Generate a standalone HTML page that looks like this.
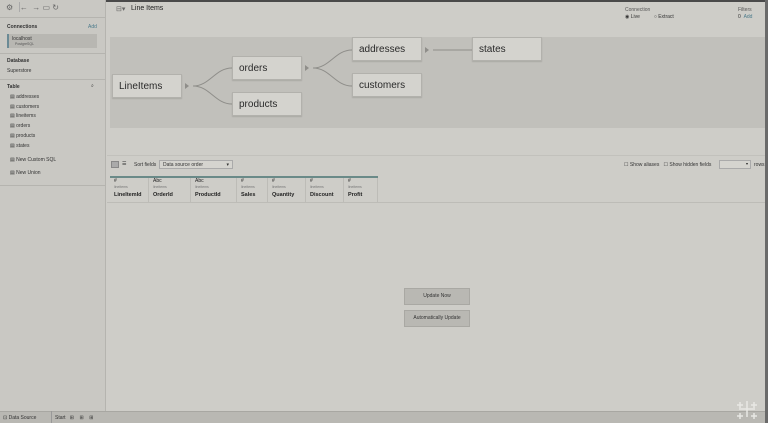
<!DOCTYPE html>
<html><head><style>
*{margin:0;padding:0;box-sizing:border-box}
body{width:768px;height:423px;overflow:hidden;background:#cecdc8;font-family:"Liberation Sans",sans-serif;color:#222;position:relative}
.a{position:absolute}
.side{left:0;top:0;width:106px;height:411px;background:#c9c8c3;border-right:1px solid #b5b4af}
.t{font-size:5px;color:#333}
.box{position:absolute;background:#d4d3ce;border:1px solid #b2b1ac;box-shadow:0 1px 1px rgba(0,0,0,.12);font-size:10px;padding-left:6px;display:flex;align-items:center;color:#2a2a2a}
.col{position:absolute;top:178px;height:24px;border-right:1px solid #bdbcb7;font-size:5px;padding-left:4px}
.col b{display:block;font-size:5.5px;margin-top:2px}
.btn{position:absolute;left:404px;width:66px;height:17px;background:#b9b8b3;border:1px solid #a9a8a3;font-size:5px;text-align:center;line-height:15px;color:#333}
</style></head><body>
<div class="a" style="left:0;top:0;width:768px;height:2px;background:#4a4a4a"></div>
<div class="a" style="left:765px;top:0;width:3px;height:423px;background:#6a6a6a"></div>
<div class="a side">
 <div class="a t" style="left:6px;top:3px;font-size:8px;color:#666">⚙ &nbsp;&nbsp;← &nbsp;→ ▭ ↻</div>
 <div class="a" style="left:19px;top:2px;width:1px;height:10px;background:#aaa"></div>
 <div class="a" style="left:0;top:17px;width:106px;height:1px;background:#b5b4af"></div>
 <div class="a t" style="left:7px;top:24px;font-weight:bold">Connections</div>
 <div class="a t" style="left:88px;top:24px;color:#4a7a8a">Add</div>
 <div class="a" style="left:7px;top:34px;width:90px;height:14px;background:#b8b7b2;border-left:2px solid #6a8a95"></div>
 <div class="a t" style="left:12px;top:36px">localhost</div>
 <div class="a" style="left:15px;top:42px;font-size:3.5px;color:#555">PostgreSQL</div>
 <div class="a" style="left:0;top:53px;width:106px;height:1px;background:#b5b4af"></div>
 <div class="a t" style="left:7px;top:58px;font-weight:bold">Database</div>
 <div class="a t" style="left:7px;top:68px">Superstore</div>
 <div class="a" style="left:0;top:79px;width:106px;height:1px;background:#b5b4af"></div>
 <div class="a t" style="left:7px;top:84px;font-weight:bold">Table</div>
 <div class="a t" style="left:91px;top:83px">⌕</div>
 <div class="a t" style="left:10px;top:93px;line-height:9.7px">▤ addresses<br>▤ customers<br>▤ lineitems<br>▤ orders<br>▤ products<br>▤ states</div>
 <div class="a t" style="left:10px;top:157px">▤ New Custom SQL</div>
 <div class="a t" style="left:10px;top:170px">▤ New Union</div>
 <div class="a" style="left:0;top:185px;width:106px;height:1px;background:#b5b4af"></div>
</div>
<div class="a t" style="left:116px;top:5px;font-size:7px;color:#666">⊟▾</div>
<div class="a" style="left:131px;top:5px;font-size:7px">Line Items</div>
<div class="a t" style="left:625px;top:7px;color:#555">Connection</div>
<div class="a t" style="left:625px;top:14px">◉ Live &nbsp;&nbsp;&nbsp;&nbsp;&nbsp;&nbsp;&nbsp;&nbsp;&nbsp;○ Extract</div>
<div class="a t" style="left:738px;top:7px;color:#555">Filters</div>
<div class="a t" style="left:738px;top:14px">0 &nbsp;<span style="color:#4a7a8a">Add</span></div>
<div class="a" style="left:110px;top:37px;width:655px;height:91px;background:#c1c0bb"></div>
<svg class="a" style="left:0;top:0" width="768" height="140">
<g stroke="#8f8e8a" stroke-width="1" fill="none">
<path d="M193 86 C210 86 215 68 232 68"/><path d="M193 86 C210 86 215 104 232 104"/>
<path d="M313 68 C330 68 335 50 352 50"/><path d="M313 68 C330 68 335 86 352 86"/>
<path d="M433 50 L472 50"/></g>
<g fill="#8f8e8a"><path d="M185 83v6l4-3z"/><path d="M305 65v6l4-3z"/><path d="M425 47v6l4-3z"/></g>
</svg>
<div class="box" style="left:112px;top:74px;width:70px;height:24px">LineItems</div>
<div class="box" style="left:232px;top:56px;width:70px;height:24px">orders</div>
<div class="box" style="left:232px;top:92px;width:70px;height:24px">products</div>
<div class="box" style="left:352px;top:37px;width:70px;height:24px">addresses</div>
<div class="box" style="left:352px;top:73px;width:70px;height:24px">customers</div>
<div class="box" style="left:472px;top:37px;width:70px;height:24px">states</div>
<div class="a" style="left:107px;top:155px;width:658px;height:1px;background:#c2c1bc"></div>
<div class="a" style="left:111px;top:161px;width:8px;height:7px;background:#aaa;border:1px solid #888"></div>
<div class="a t" style="left:122px;top:161px">☰</div>
<div class="a t" style="left:134px;top:162px">Sort fields</div>
<div class="a t" style="left:159px;top:160px;width:74px;height:9px;background:#d5d4cf;border:1px solid #aaa;padding:1px 3px">Data source order<span style="float:right">▾</span></div>
<div class="a t" style="left:624px;top:162px">☐ Show aliases &nbsp;&nbsp;☐ Show hidden fields</div>
<div class="a" style="left:719px;top:160px;width:32px;height:9px;background:#d5d4cf;border:1px solid #aaa;font-size:4px;text-align:right;padding-right:2px">▾</div>
<div class="a t" style="left:754px;top:162px">rows</div>
<div class="a" style="left:110px;top:176px;width:268px;height:2px;background:#6a8a88"></div>
<div class="a" style="left:107px;top:202px;width:658px;height:1px;background:#bdbcb7"></div>
<div class="col" style="left:110px;width:39px">#<br><span style="font-size:3.5px;color:#777">lineitems</span><b>LineItemId</b></div>
<div class="col" style="left:149px;width:42px">Abc<br><span style="font-size:3.5px;color:#777">lineitems</span><b>OrderId</b></div>
<div class="col" style="left:191px;width:46px">Abc<br><span style="font-size:3.5px;color:#777">lineitems</span><b>ProductId</b></div>
<div class="col" style="left:237px;width:31px">#<br><span style="font-size:3.5px;color:#777">lineitems</span><b>Sales</b></div>
<div class="col" style="left:268px;width:38px">#<br><span style="font-size:3.5px;color:#777">lineitems</span><b>Quantity</b></div>
<div class="col" style="left:306px;width:38px">#<br><span style="font-size:3.5px;color:#777">lineitems</span><b>Discount</b></div>
<div class="col" style="left:344px;width:34px">#<br><span style="font-size:3.5px;color:#777">lineitems</span><b>Profit</b></div>
<div class="btn" style="top:288px">Update Now</div>
<div class="btn" style="top:310px">Automatically Update</div>
<div class="a" style="left:0;top:411px;width:765px;height:12px;background:#b9b8b3;border-top:1px solid #a8a7a2"></div>
<div class="a t" style="left:3px;top:415px">⊡ Data Source</div>
<div class="a" style="left:51px;top:411px;width:1px;height:12px;background:#999"></div>
<div class="a t" style="left:55px;top:415px">Start &nbsp;&nbsp;⊞ &nbsp;&nbsp;&nbsp;⊞ &nbsp;&nbsp;&nbsp;⊞</div>
<svg class="a" style="left:733px;top:398px" width="30" height="25"><g stroke="#e8e8e4" stroke-width="1.5" fill="none">
<path d="M14 3v16M6 11h16"/><path d="M7 4v6M4 7h6"/><path d="M21 4v6M18 7h6"/><path d="M7 15v6M4 18h6"/><path d="M21 15v6M18 18h6"/></g></svg>
</body></html>
